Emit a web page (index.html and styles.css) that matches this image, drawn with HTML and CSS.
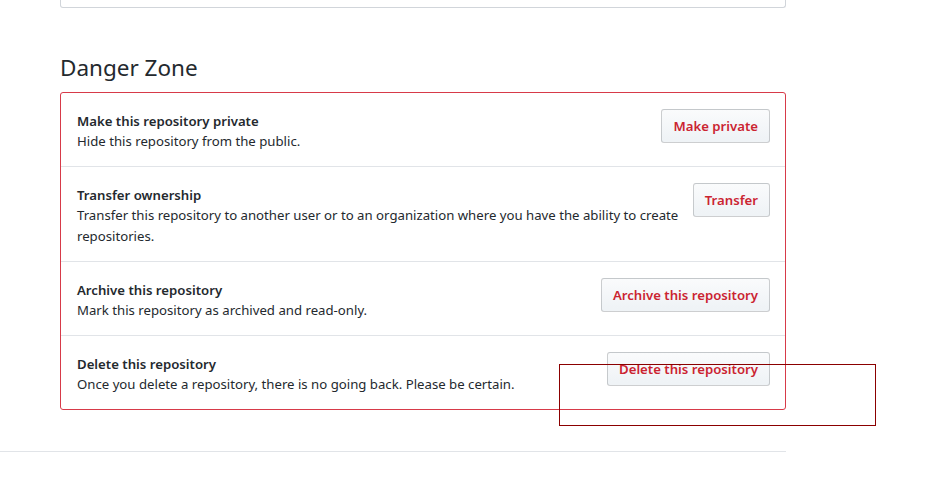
FILE: index.html
```html
<!DOCTYPE html>
<html lang="en">
<head>
<meta charset="utf-8">
<title>Danger Zone</title>
<link rel="stylesheet" href="styles.css">
</head>
<body>
<div class="page">
  <div class="prev-box"></div>

  <h2 class="subhead">Danger Zone</h2>

  <ul class="danger-box">
    <li class="row">
      <div class="row-text">
        <strong class="row-title">Make this repository private</strong>
        <p class="row-desc">Hide this repository from the public.</p>
      </div>
      <button class="btn-danger" type="button">Make private</button>
    </li>
    <li class="row">
      <div class="row-text">
        <strong class="row-title">Transfer ownership</strong>
        <p class="row-desc">Transfer this repository to another user or to an organization where you have the ability to create repositories.</p>
      </div>
      <button class="btn-danger" type="button">Transfer</button>
    </li>
    <li class="row">
      <div class="row-text">
        <strong class="row-title">Archive this repository</strong>
        <p class="row-desc">Mark this repository as archived and read-only.</p>
      </div>
      <button class="btn-danger" type="button">Archive this repository</button>
    </li>
    <li class="row">
      <div class="row-text">
        <strong class="row-title">Delete this repository</strong>
        <p class="row-desc">Once you delete a repository, there is no going back. Please be certain.</p>
      </div>
      <button class="btn-danger" type="button">Delete this repository</button>
    </li>
  </ul>

  <div class="footer-rule"></div>
</div>
<div class="highlight-frame"></div>
</body>
</html>
```

FILE: styles.css
```css
html, body {
  margin: 0;
  padding: 0;
  background: #ffffff;
}

body {
  font-family: "Noto Sans", "Open Sans", "DejaVu Sans", sans-serif;
  font-size: 13.2px;
  line-height: 21px;
  color: #24292e;
  position: relative;
  min-height: 490px;
}

.page {
  width: 786px;
  display: flex;
  flex-direction: column;
}

.prev-box {
  margin-left: 60px;
  height: 7px;
  border: 1px solid #d1d5da;
  border-top: none;
  border-radius: 0 0 3px 3px;
}

.subhead {
  margin: 42px 0 6px 60px;
  font-size: 22.5px;
  line-height: 36px;
  font-weight: 400;
  color: #24292e;
}

.danger-box {
  list-style: none;
  margin: 0 0 0 60px;
  padding: 0;
  border: 1px solid #d73a49;
  border-radius: 3px;
}

.row {
  display: flex;
  align-items: flex-start;
  gap: 12px;
  padding: 16px 15px 14px 16px;
  border-top: 1px solid #e1e4e8;
}

.row:first-child {
  border-top: none;
}

.row-text {
  flex: 1;
  padding-top: 2px;
}

.row-title {
  display: block;
  font-weight: 600;
  line-height: 20px;
}

.row-desc {
  margin: 0;
  line-height: 21px;
}

.btn-danger {
  flex: none;
  height: 34px;
  padding: 0 11px;
  font-family: inherit;
  font-size: 13.2px;
  font-weight: 600;
  color: #cb2431;
  background: linear-gradient(#fafbfc, #eff3f6 90%);
  border: 1px solid rgba(27, 31, 35, 0.2);
  border-radius: 3px;
}

.footer-rule {
  margin-top: 41px;
  height: 1px;
  background: #e1e4e8;
}

.highlight-frame {
  position: absolute;
  left: 559px;
  top: 364px;
  width: 315px;
  height: 60px;
  border: 1px solid #8b0000;
}
```
